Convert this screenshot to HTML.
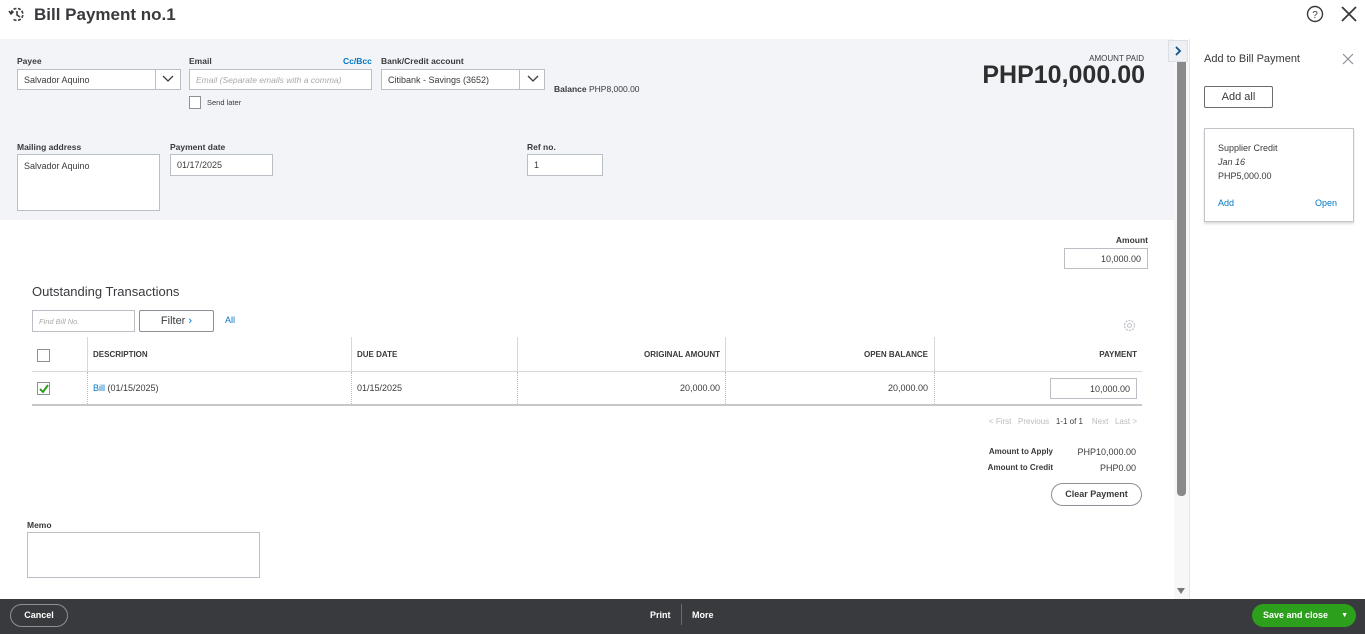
<!DOCTYPE html><html><head><style>
*{box-sizing:border-box;margin:0;padding:0}
body{width:1365px;height:634px;overflow:hidden;background:#fff;font-family:"Liberation Sans",sans-serif;color:#393a3d;position:relative;font-size:9px}
.a{position:absolute}
.lbl{font-size:8.5px;font-weight:bold;color:#393a3d}
.inp{position:absolute;background:#fff;border:1px solid #babec5;font-size:9px;padding:0 6px;display:flex;align-items:center}
.th{position:absolute;font-size:8px;font-weight:bold;top:350px}
.bl{color:#0077c5}
</style></head><body>
<svg class="a" style="left:7px;top:5px" width="20" height="20" viewBox="0 0 20 20"><path d="M4 8a6 6 0 1 1 2 6" fill="none" stroke="#393a3d" stroke-width="1.6" stroke-dasharray="3 1.5"/><path d="M10 6v4l3 2" fill="none" stroke="#393a3d" stroke-width="1.6"/><path d="M2 6l2 3 2.5-2.5" fill="none" stroke="#393a3d" stroke-width="1.5"/></svg>
<div class="a" style="left:34px;top:5px;font-size:17px;font-weight:bold;color:#393a3d">Bill Payment no.1</div>
<svg class="a" style="left:1306px;top:5px" width="18" height="18"><circle cx="9" cy="9" r="7.5" fill="none" stroke="#393a3d" stroke-width="1.4"/><text x="9" y="13" font-size="10" text-anchor="middle" font-family="Liberation Sans" fill="#393a3d">?</text></svg>
<svg class="a" style="left:1340px;top:5px" width="18" height="18"><path d="M2 2l14 14M16 2L2 16" stroke="#393a3d" stroke-width="1.8"/></svg>

<div class="a" style="left:0;top:39px;width:1174px;height:181px;background:#f3f4f7"></div>
<div class="a lbl" style="left:17px;top:56px">Payee</div>
<div class="inp" style="left:17px;top:69px;width:164px;height:21px">Salvador Aquino</div>
<div class="a" style="left:155px;top:69px;width:1px;height:21px;background:#babec5"></div>
<svg class="a" style="left:161px;top:74px" width="14" height="10"><path d="M2 2l5 5 5-5" fill="none" stroke="#393a3d" stroke-width="1.3"/></svg>
<div class="a lbl" style="left:189px;top:56px">Email</div>
<div class="a lbl bl" style="left:343px;top:56px">Cc/Bcc</div>
<div class="inp" style="left:189px;top:69px;width:183px;height:21px;color:#aaa;font-style:italic;font-size:8.5px">Email (Separate emails with a comma)</div>
<div class="a" style="left:189px;top:96px;width:12px;height:13px;border:1px solid #8d9096;background:#fff"></div>
<div class="a" style="left:207px;top:98px;font-size:7.5px">Send later</div>
<div class="a lbl" style="left:381px;top:56px">Bank/Credit account</div>
<div class="inp" style="left:381px;top:69px;width:164px;height:21px">Citibank - Savings (3652)</div>
<div class="a" style="left:519px;top:69px;width:1px;height:21px;background:#babec5"></div>
<svg class="a" style="left:526px;top:74px" width="14" height="10"><path d="M2 2l5 5 5-5" fill="none" stroke="#393a3d" stroke-width="1.3"/></svg>
<div class="a" style="left:554px;top:84px;font-size:8.5px"><b>Balance</b> PHP8,000.00</div>
<div class="a" style="left:1000px;top:54px;width:144px;text-align:right;font-size:8px">AMOUNT PAID</div>
<div class="a" style="left:900px;top:61px;width:245px;text-align:right;font-size:25px;font-weight:bold;color:#2d2e30">PHP10,000.00</div>

<div class="a lbl" style="left:17px;top:142px">Mailing address</div>
<div class="inp" style="left:17px;top:154px;width:143px;height:57px;align-items:flex-start;padding-top:6px">Salvador Aquino</div>
<div class="a lbl" style="left:170px;top:142px">Payment date</div>
<div class="inp" style="left:170px;top:154px;width:103px;height:22px">01/17/2025</div>
<div class="a lbl" style="left:527px;top:142px">Ref no.</div>
<div class="inp" style="left:527px;top:154px;width:76px;height:22px">1</div>

<div class="a lbl" style="left:1100px;top:235px;width:48px;text-align:right">Amount</div>
<div class="inp" style="left:1064px;top:248px;width:84px;height:21px;justify-content:flex-end">10,000.00</div>

<div class="a" style="left:32px;top:284px;font-size:13px">Outstanding Transactions</div>
<div class="inp" style="left:32px;top:310px;width:103px;height:22px;color:#aaa;font-style:italic;font-size:7.5px">Find Bill No.</div>
<div class="a" style="left:139px;top:310px;width:75px;height:22px;border:1px solid #8d9096;border-radius:2px;font-size:11px;text-align:center;line-height:20px">Filter <span style="color:#0077c5">›</span></div>
<div class="a bl" style="left:225px;top:315px;font-size:9px">All</div>
<svg class="a" style="left:1122px;top:318px" width="15" height="15"><circle cx="7.5" cy="7.5" r="5" fill="none" stroke="#c1c4c8" stroke-width="1.3" stroke-dasharray="2 1.2"/><circle cx="7.5" cy="7.5" r="2" fill="none" stroke="#c1c4c8"/></svg>

<div class="a" style="left:32px;top:371px;width:1110px;height:1px;background:#d4d7dc"></div>
<div class="a" style="left:32px;top:404px;width:1110px;height:2px;background:#c6c8cc"></div>
<div class="a" style="left:87px;top:337px;width:1px;height:34px;background:#d4d7dc"></div>
<div class="a" style="left:351px;top:337px;width:1px;height:34px;background:#d4d7dc"></div>
<div class="a" style="left:517px;top:337px;width:1px;height:34px;background:#d4d7dc"></div>
<div class="a" style="left:725px;top:337px;width:1px;height:34px;background:#d4d7dc"></div>
<div class="a" style="left:934px;top:337px;width:1px;height:34px;background:#d4d7dc"></div>
<div class="a" style="left:87px;top:372px;height:32px;border-left:1px dotted #bbb"></div>
<div class="a" style="left:351px;top:372px;height:32px;border-left:1px dotted #bbb"></div>
<div class="a" style="left:517px;top:372px;height:32px;border-left:1px dotted #bbb"></div>
<div class="a" style="left:725px;top:372px;height:32px;border-left:1px dotted #bbb"></div>
<div class="a" style="left:934px;top:372px;height:32px;border-left:1px dotted #bbb"></div>
<div class="a" style="left:37px;top:349px;width:13px;height:13px;border:1px solid #8d9096"></div>
<div class="th" style="left:93px">DESCRIPTION</div>
<div class="th" style="left:357px">DUE DATE</div>
<div class="th" style="left:520px;width:200px;text-align:right">ORIGINAL AMOUNT</div>
<div class="th" style="left:728px;width:200px;text-align:right">OPEN BALANCE</div>
<div class="th" style="left:937px;width:200px;text-align:right">PAYMENT</div>
<div class="a" style="left:37px;top:382px;width:13px;height:13px;border:1px solid #8d9096"></div>
<svg class="a" style="left:38px;top:383px" width="12" height="12"><path d="M2 6l3 3 5-7" fill="none" stroke="#2ca01c" stroke-width="2"/></svg>
<div class="a" style="left:93px;top:383px"><span class="bl">Bill</span> (01/15/2025)</div>
<div class="a" style="left:357px;top:383px">01/15/2025</div>
<div class="a" style="left:520px;top:383px;width:200px;text-align:right">20,000.00</div>
<div class="a" style="left:728px;top:383px;width:200px;text-align:right">20,000.00</div>
<div class="inp" style="left:1050px;top:378px;width:87px;height:21px;justify-content:flex-end">10,000.00</div>

<div class="a" style="left:900px;top:417px;width:237px;text-align:right;font-size:8px;color:#bbb">&lt; First &nbsp; Previous &nbsp; <span style="color:#393a3d">1-1 of 1</span> &nbsp;&nbsp; Next &nbsp; Last &gt;</div>
<div class="a" style="left:960px;top:447px;width:93px;text-align:right;font-size:8px;font-weight:bold">Amount to Apply</div>
<div class="a" style="left:1040px;top:447px;width:96px;text-align:right;font-size:9px">PHP10,000.00</div>
<div class="a" style="left:960px;top:463px;width:93px;text-align:right;font-size:8px;font-weight:bold">Amount to Credit</div>
<div class="a" style="left:1040px;top:463px;width:96px;text-align:right;font-size:9px">PHP0.00</div>
<div class="a" style="left:1051px;top:483px;width:91px;height:23px;border:1px solid #8d9096;border-radius:12px;text-align:center;line-height:21px;font-size:9px;font-weight:bold">Clear Payment</div>

<div class="a lbl" style="left:27px;top:520px">Memo</div>
<div class="inp" style="left:27px;top:532px;width:233px;height:46px"></div>

<div class="a" style="left:1174px;top:62px;width:15px;height:537px;background:#f7f7f7"></div>
<div class="a" style="left:1177px;top:62px;width:9px;height:434px;background:#8a8a8a;border-radius:0 0 4px 4px"></div>
<svg class="a" style="left:1176px;top:587px" width="10" height="8"><path d="M1 1h8l-4 6z" fill="#777"/></svg>
<div class="a" style="left:1168px;top:40px;width:20px;height:22px;background:#eef0f3;border:1px solid #dcdee2"></div>
<svg class="a" style="left:1174px;top:46px" width="8" height="10"><path d="M2 1l4 4-4 4" fill="none" stroke="#0f4f8a" stroke-width="1.8"/></svg>
<div class="a" style="left:1189px;top:39px;width:1px;height:560px;background:#e3e5e8"></div>
<div class="a" style="left:1204px;top:53px;font-size:11px">Add to Bill Payment</div>
<svg class="a" style="left:1342px;top:53px" width="12" height="12"><path d="M1 1l10 10M11 1L1 11" stroke="#8d9096" stroke-width="1.2"/></svg>
<div class="a" style="left:1204px;top:86px;width:69px;height:22px;border:1px solid #6b6c72;border-radius:2px;text-align:center;line-height:20px;font-size:11px">Add all</div>
<div class="a" style="left:1204px;top:128px;width:150px;height:94px;border:1px solid #c1c4c8;box-shadow:0 2px 2px #ddd"></div>
<div class="a" style="left:1218px;top:143px;font-size:9px">Supplier Credit</div>
<div class="a" style="left:1218px;top:157px;font-size:9px;font-style:italic">Jan 16</div>
<div class="a" style="left:1218px;top:171px;font-size:9px">PHP5,000.00</div>
<div class="a bl" style="left:1218px;top:198px;font-size:9px">Add</div>
<div class="a bl" style="left:1315px;top:198px;font-size:9px">Open</div>

<div class="a" style="left:0;top:599px;width:1365px;height:35px;background:#393a3d"></div>
<div class="a" style="left:10px;top:604px;width:58px;height:23px;border:1px solid #8d9096;border-radius:12px;color:#fff;text-align:center;line-height:21px;font-size:9px;font-weight:bold">Cancel</div>
<div class="a" style="left:650px;top:610px;color:#fff;font-size:9px;font-weight:bold">Print</div>
<div class="a" style="left:681px;top:604px;width:1px;height:21px;background:#6b6c72"></div>
<div class="a" style="left:692px;top:610px;color:#fff;font-size:9px;font-weight:bold">More</div>
<div class="a" style="left:1252px;top:604px;width:104px;height:23px;background:#2ca01c;border-radius:12px;color:#fff;font-size:9px;font-weight:bold;line-height:23px;padding-left:11px">Save and close<span style="position:absolute;right:8px;font-size:7px">▼</span></div>
</body></html>
